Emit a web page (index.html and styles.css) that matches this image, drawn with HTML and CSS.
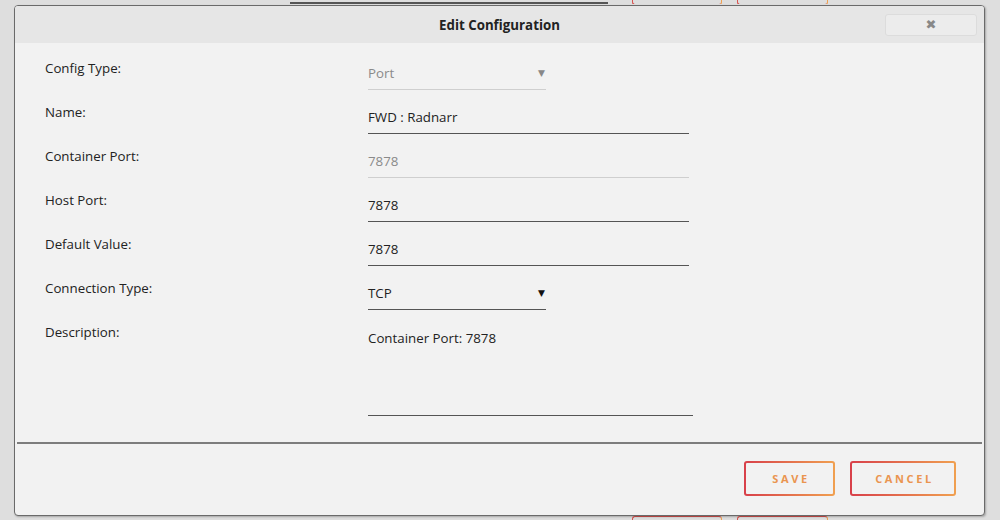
FILE: index.html
```html
<html>
    <head>
        <meta name="viewport" content="width=device-width, initial-scale=1"/>
    <title>Edit Configuration</title>
    <link rel="stylesheet" href="styles.css">
    </head>
    <body>
        <div class="backdrop">
            <div class="bg-line"></div>
            <div class="bg-btn bg-btn-a"></div>
            <div class="bg-btn bg-btn-b"></div>
        </div>
        <div class="backdrop backdrop-bottom">
            <div class="bg-btn bg-btn-a"></div>
            <div class="bg-btn bg-btn-b"></div>
        </div>

        <div class="modal">
            <div class="modal-head">
                <span class="modal-title">Edit Configuration</span>
                <button type="button" class="close-btn">&#10006;</button>
            </div>
            <div class="modal-body">
                <div class="row">
                    <div class="label">Config Type:</div>
                    <div class="field short disabled">Port<span class="arrow">&#9660;</span></div>
                </div>
                <div class="row">
                    <div class="label">Name:</div>
                    <div class="field">FWD : Radnarr</div>
                </div>
                <div class="row">
                    <div class="label">Container Port:</div>
                    <div class="field disabled">7878</div>
                </div>
                <div class="row">
                    <div class="label">Host Port:</div>
                    <div class="field">7878</div>
                </div>
                <div class="row">
                    <div class="label">Default Value:</div>
                    <div class="field">7878</div>
                </div>
                <div class="row">
                    <div class="label">Connection Type:</div>
                    <div class="field short">TCP<span class="arrow">&#9660;</span></div>
                </div>
                <div class="row">
                    <div class="label">Description:</div>
                    <div class="field area">Container Port: 7878</div>
                </div>
            </div>
            <div class="modal-foot">
                <button type="button" class="btn save">SAVE</button>
                <button type="button" class="btn cancel">CANCEL</button>
            </div>
        </div>
    </body>
</html>
```

FILE: styles.css
```css
body{
    margin: 0;
    background-color: #dedede;
    font-family: "Open Sans", "DejaVu Sans", sans-serif;
    font-size: 13.3px;
    color: #222;
    height: 520px;
    overflow: hidden;
}
.backdrop{
    display: flex;
    align-items: flex-start;
    height: 4px;
    padding-left: 290px;
    overflow: hidden;
}
.backdrop-bottom{
    margin-top: 512px;
    padding-left: 632px;
}
.bg-line{
    width: 318px;
    height: 2px;
    margin-top: 2px;
    background-color: #555;
    margin-right: 24px;
}
.bg-btn{
    height: 30px;
    margin-top: -27px;
    border: 1px solid #d9534f;
    border-right-color: #f0a050;
    border-radius: 3px;
}
.backdrop-bottom .bg-btn{
    margin-top: 0;
}
.bg-btn-a{
    width: 88px;
    margin-right: 15px;
}
.bg-btn-b{
    width: 89px;
}

.modal{
    position: absolute;
    top: 5px;
    left: 14px;
    width: 969px;
    height: 509px;
    border: 1px solid #6a6a6a;
    border-radius: 4px;
    background-color: #f2f2f2;
    box-shadow: 1px 1px 2px rgba(0,0,0,0.25);
    display: flex;
    flex-direction: column;
    overflow: hidden;
}
.modal-head{
    height: 37px;
    flex-shrink: 0;
    background-color: #e6e6e6;
    display: flex;
    align-items: center;
    justify-content: center;
    position: relative;
}
.modal-title{
    font-weight: bold;
    font-size: 13.3px;
    color: #222;
    margin-top: 1px;
}
.close-btn{
    position: absolute;
    right: 7px;
    top: 8px;
    width: 92px;
    height: 22px;
    border: 1px solid #dcdcdc;
    border-radius: 3px;
    background-color: #ececec;
    color: #888;
    font-size: 13px;
    line-height: 18px;
    padding: 0;
    font-family: "DejaVu Sans", sans-serif;
}

.modal-body{
    padding: 15px 0 0 28px;
    height: 384px;
    flex-shrink: 0;
    border-bottom: 2px solid #7d7d7d;
    margin: 0 2px;
}
.row{
    display: flex;
    height: 44px;
}
.label{
    width: 323px;
    line-height: 20px;
    color: #222;
}
.field{
    position: relative;
    margin-top: 4px;
    width: 321px;
    height: 28px;
    padding-top: 1px;
    line-height: 20px;
    border-bottom: 1px solid #555;
    color: #222;
    box-sizing: border-box;
}
.field.short{
    width: 178px;
}
.field.disabled{
    color: #8a8a8a;
    border-bottom-color: #cfcfcf;
}
.field.area{
    width: 325px;
    height: 90px;
    padding-top: 2px;
}
.arrow{
    position: absolute;
    right: 1px;
    top: 1px;
    font-size: 9px;
    color: #111;
    font-family: "DejaVu Sans", sans-serif;
}
.disabled .arrow{
    color: #888;
}

.modal-foot{
    display: flex;
    justify-content: flex-end;
    gap: 15px;
    padding: 17px 28px 0 0;
}
.btn{
    height: 35px;
    border: 2px solid transparent;
    border-radius: 3px;
    background: linear-gradient(#f2f2f2, #f2f2f2) padding-box,
                linear-gradient(90deg, #d8404a, #f0a050) border-box;
    color: #ea9550;
    font-family: "Open Sans", sans-serif;
    font-weight: bold;
    font-size: 11px;
    letter-spacing: 2.6px;
    padding: 0 0 0 3px;
}
.save{
    width: 91px;
}
.cancel{
    width: 106px;
}
```
